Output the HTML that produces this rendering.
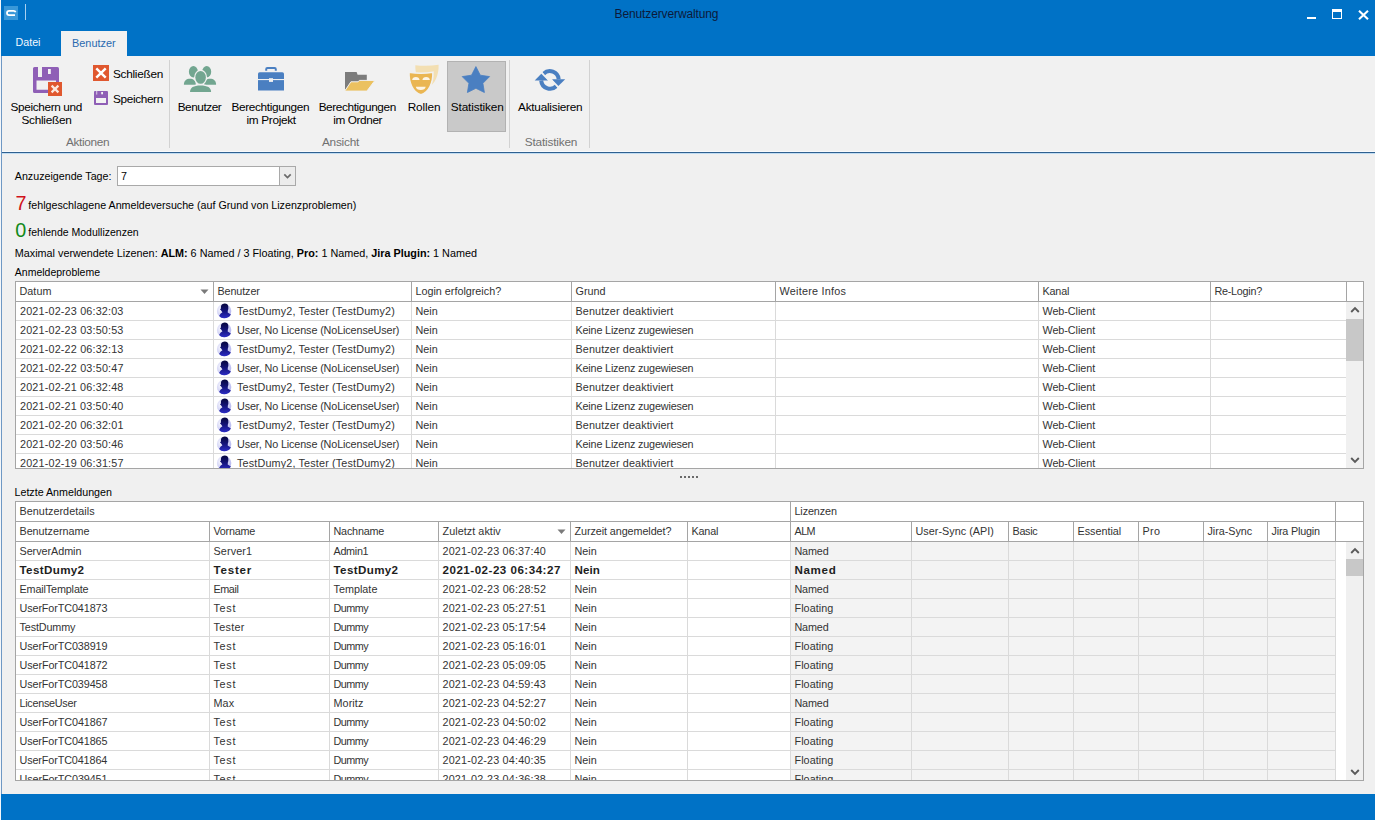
<!DOCTYPE html>
<html><head><meta charset="utf-8"><style>
html,body{margin:0;padding:0}
body{width:1375px;height:820px;overflow:hidden;position:relative;background:#f0f0f0;font-family:"Liberation Sans",sans-serif;font-size:11px}
.t{position:absolute;white-space:pre;line-height:1;}
.a{position:absolute;display:block}
</style></head><body>

<div class="a" style="left:0px;top:0px;width:1375px;height:56px;background:#0072c6;"></div>
<div class="a" style="left:4px;top:6px;width:14px;height:14px;background:#3a98d8;"></div>
<svg class="a" style="left:4px;top:6px" width="14" height="14" viewBox="0 0 14 14"><path d="M11.6 6.2 Q11.2 4.9 9.6 4.9 H5.2 Q3 4.9 3 7 Q3 9.1 5.2 9.1 H11" fill="none" stroke="#fff" stroke-width="1.8"/></svg>
<div class="a" style="left:25px;top:4px;width:1px;height:16px;background:#a8d0f0;"></div>
<div class="t" style="left:614.5px;top:8.00px;font-size:12px;color:#0c1a3a;letter-spacing:-0.12px;">Benutzerverwaltung</div>
<div class="a" style="left:1307px;top:17px;width:9px;height:2px;background:#fff;"></div>
<div class="a" style="left:1332px;top:9px;width:8px;height:6px;border:1px solid #fff;border-top-width:3px"></div>
<svg class="a" style="left:1358px;top:10px" width="11" height="10" viewBox="0 0 11 10"><path d="M1 0.8 L10 9.2 M10 0.8 L1 9.2" stroke="#fff" stroke-width="2.1"/></svg>
<div class="t" style="left:15.5px;top:37.00px;font-size:10.7px;color:#f4f8ff;">Datei</div>
<div class="a" style="left:61px;top:31px;width:66px;height:25px;background:#f1f1f1;"></div>
<div class="t" style="left:72px;top:38.00px;font-size:10.9px;color:#2a6ab0;">Benutzer</div>
<div class="a" style="left:0px;top:56px;width:1375px;height:96px;background:#f1f1f1;"></div>
<div class="a" style="left:0px;top:152px;width:1375px;height:1px;background:#2f6090;"></div>
<div class="a" style="left:0px;top:151px;width:1375px;height:1px;background:#f8fafc;"></div>
<div class="a" style="left:0px;top:153px;width:1375px;height:1px;background:#c0dcf2;"></div>
<div class="a" style="left:1px;top:56px;width:1px;height:764px;background:#6f98c4;"></div>
<svg class="a" style="left:33px;top:67px" width="30" height="30" viewBox="0 0 30 30">
<path fill="#8f5fb6" d="M1.5 0 H5 V10 H26 V15 H23 V13.5 H3.5 V22.8 H15 V26 H1.5 Q0 26 0 24.5 V1.5 Q0 0 1.5 0 Z"/>
<path fill="#8f5fb6" d="M9 0 H24.5 Q26 0 26 1.5 V10 H9 Z"/>
<rect x="15" y="2" width="2.8" height="5" fill="#f4f4f4"/>
<rect x="15" y="15" width="14" height="14" fill="#e0582f"/>
<path d="M18.6 18.6 L25.4 25.4 M25.4 18.6 L18.6 25.4" stroke="#fbe9e0" stroke-width="2.2"/>
</svg>
<div class="t" style="left:10.469px;top:102.00px;font-size:11.8px;color:#000;letter-spacing:-0.351px;">Speichern und</div>
<div class="t" style="left:21.469px;top:115.00px;font-size:11.8px;color:#000;letter-spacing:-0.272px;">Schließen</div>
<svg class="a" style="left:93px;top:65px" width="16" height="16" viewBox="0 0 16 16"><rect width="16" height="16" fill="#e0582f"/><path d="M3.3 3.3 L12.7 12.7 M12.7 3.3 L3.3 12.7" stroke="#fff" stroke-width="2.4"/></svg>
<div class="t" style="left:112.969px;top:69.00px;font-size:11.8px;color:#000;letter-spacing:-0.272px;">Schließen</div>
<svg class="a" style="left:94px;top:91px" width="14" height="14" viewBox="0 0 14 14">
<path fill="#8f5fb6" d="M0 1 Q0 0 1 0 H13 Q14 0 14 1 V13 Q14 14 13 14 H1 Q0 14 0 13 Z"/>
<rect x="2" y="7" width="10" height="5" fill="#f3f3f3"/>
<rect x="2" y="0" width="1.3" height="3.6" fill="#f1f1f1" opacity="0.6"/>
<rect x="7.2" y="1" width="1.8" height="2.3" fill="#f3f3f3"/>
</svg>
<div class="t" style="left:112.969px;top:94.00px;font-size:11.8px;color:#000;letter-spacing:-0.355px;">Speichern</div>
<div class="t" style="left:65.9764px;top:137.00px;font-size:11.8px;color:#707070;letter-spacing:-0.332px;">Aktionen</div>
<div class="a" style="left:169px;top:60px;width:1px;height:88px;background:#d2d2d2;"></div>
<svg class="a" style="left:180px;top:62px" width="40" height="34" viewBox="0 0 40 34">
<ellipse cx="13.4" cy="9.7" rx="4.5" ry="5.7" fill="#72a690"/>
<ellipse cx="26.7" cy="9.7" rx="4.5" ry="5.7" fill="#72a690"/>
<path fill="#72a690" d="M3.9 22.8 C3.9 18.5 6.5 16.8 9.9 16.8 C13.3 16.8 15.8 18.5 15.8 22.8 Z"/>
<path fill="#72a690" d="M24.2 22.8 C24.2 18.5 26.7 16.8 30.1 16.8 C33.5 16.8 36.1 18.5 36.1 22.8 Z"/>
<ellipse cx="20.6" cy="15.4" rx="6.5" ry="7.6" fill="#f1f1f1"/>
<path fill="#f1f1f1" d="M8.8 31 C8.8 25 12.5 22.2 20.5 22.2 C28.5 22.2 32.3 25 32.3 31 Z"/>
<ellipse cx="20.6" cy="15.4" rx="5.25" ry="6.4" fill="#72a690"/>
<path fill="#72a690" d="M10 29.9 C10 25.5 13.5 23.4 20.5 23.4 C27.5 23.4 31.1 25.5 31.1 29.9 Z"/>
</svg>
<div class="t" style="left:177.6324px;top:102.00px;font-size:11.8px;color:#000;letter-spacing:-0.438px;">Benutzer</div>
<svg class="a" style="left:257px;top:66px" width="28" height="26" viewBox="0 0 28 26">
<path fill="none" stroke="#4a7fc1" stroke-width="2" d="M9.2 4.8 V3.2 Q9.2 2 10.4 2 H17.6 Q18.8 2 18.8 3.2 V4.8"/>
<path fill="#4a7fc1" d="M1 7.8 Q1 6.2 2.6 6.2 H25.4 Q27 6.2 27 7.8 V24.6 H1 Z"/>
<rect x="1" y="13" width="26" height="1.1" fill="#f1f1f1"/>
<rect x="12" y="12.2" width="4" height="3.7" fill="#f1f1f1"/>
</svg>
<div class="t" style="left:231.4324px;top:102.00px;font-size:11.8px;color:#000;letter-spacing:-0.348px;">Berechtigungen</div>
<div class="t" style="left:246.40939999999998px;top:115.00px;font-size:11.8px;color:#000;letter-spacing:-0.310px;">im Projekt</div>
<svg class="a" style="left:340px;top:62px" width="40" height="34" viewBox="0 0 40 34">
<path fill="#7c7c7c" d="M5 10 H16.6 L17.6 12.8 H26.8 V20 H12 L5 28 Z"/>
<path fill="#ebc160" stroke="#f1f1f1" stroke-width="1" d="M4.7 29.1 L10.9 19.8 H18.1 L19.3 18.4 H34.9 L26.9 29.1 Z"/>
</svg>
<div class="t" style="left:318.6324px;top:102.00px;font-size:11.8px;color:#000;letter-spacing:-0.386px;">Berechtigungen</div>
<div class="t" style="left:333.2094px;top:115.00px;font-size:11.8px;color:#000;letter-spacing:-0.396px;">im Ordner</div>
<svg class="a" style="left:404px;top:62px" width="40" height="36" viewBox="0 0 40 36">
<path fill="#f3dfb2" d="M11.3 3.2 Q22.8 4.6 34.6 2.8 C35 12.5 31 23.5 23 25.4 C15 23.5 11 12.5 11.3 3.2 Z"/>
<path fill="#eab653" stroke="#f1f1f1" stroke-width="1.6" d="M5 10.3 Q17 12.2 28.9 10.3 C29.3 20.5 25 31 16.9 32.7 C8.8 31 4.6 20.5 5 10.3 Z"/>
<path fill="#fdf5e6" d="M8.1 18 Q8.5 15 11.85 15 Q15.2 15 15.6 18 Z M18.4 18 Q18.8 15 22.15 15 Q25.5 15 25.9 18 Z"/>
<path fill="#fdf5e6" d="M11.8 24.8 H21.7 Q21 28.1 16.75 28.1 Q12.5 28.1 11.8 24.8 Z"/>
</svg>
<div class="t" style="left:407.6324px;top:102.00px;font-size:11.8px;color:#000;letter-spacing:-0.104px;">Rollen</div>
<div class="a" style="left:447px;top:61px;width:57px;height:69px;background:#c9c9c9;border:1px solid #b2b2b2"></div>
<svg class="a" style="left:461px;top:66px" width="30" height="28" viewBox="0 0 30 28"><path fill="#4a7fc1" stroke="#4a7fc1" stroke-width="0.8" stroke-linejoin="round" d="M14.9 0.6 L19.3 9.2 L28.6 10.6 L21.9 17.3 L23.4 26.5 L14.9 22.3 L6.4 26.5 L7.9 17.3 L1.2 10.6 L10.5 9.2 Z"/></svg>
<div class="t" style="left:450.86899999999997px;top:102.00px;font-size:11.8px;color:#000;letter-spacing:-0.154px;">Statistiken</div>
<div class="a" style="left:509px;top:60px;width:1px;height:88px;background:#d2d2d2;"></div>
<div class="t" style="left:321.9764px;top:137.00px;font-size:11.8px;color:#707070;letter-spacing:-0.231px;">Ansicht</div>
<svg class="a" style="left:530px;top:64px" width="40" height="32" viewBox="0 0 40 32">
<path fill="none" stroke="#4a7fc1" stroke-width="4" d="M13.6 9.7 A8.9 8.9 0 0 1 28.7 15.3"/>
<path fill="#4a7fc1" d="M21.9 15.2 H35.2 L28.4 21.9 Z"/>
<path fill="none" stroke="#4a7fc1" stroke-width="4" d="M11.2 16.5 A8.9 8.9 0 0 0 26.2 22.3"/>
<path fill="#4a7fc1" d="M4.7 16.6 H18 L11.3 9.8 Z"/>
<path stroke="#f1f1f1" stroke-width="1" d="M11.5 7.5 L18.6 16.6 M21.5 15.2 L28.2 24"/>
</svg>
<div class="t" style="left:518.0764px;top:102.00px;font-size:11.8px;color:#000;letter-spacing:-0.247px;">Aktualisieren</div>
<div class="t" style="left:524.769px;top:137.00px;font-size:11.8px;color:#707070;letter-spacing:-0.184px;">Statistiken</div>
<div class="a" style="left:589px;top:60px;width:1px;height:88px;background:#d2d2d2;"></div>
<div class="t" style="left:14.8px;top:171.00px;font-size:10.7px;color:#000;">Anzuzeigende Tage:</div>
<div class="a" style="left:117px;top:166px;width:177px;height:18px;background:#fff;border:1px solid #a9a9a9"></div>
<div class="a" style="left:279px;top:167px;width:15px;height:18px;background:#ececec;border-left:1px solid #a9a9a9"></div>
<svg class="a" style="left:283px;top:173px" width="9" height="7" viewBox="0 0 9 7"><path d="M1.3 1.3 L4.5 4.5 L7.7 1.3" fill="none" stroke="#6a6a6a" stroke-width="1.7"/></svg>
<div class="t" style="left:121px;top:171.00px;font-size:10.7px;color:#000;">7</div>
<div class="t" style="left:15.4px;top:194.00px;font-size:19.8px;color:#d0121b;">7</div>
<div class="t" style="left:28.3px;top:200.00px;font-size:10.7px;color:#000;">fehlgeschlagene Anmeldeversuche (auf Grund von Lizenzproblemen)</div>
<div class="t" style="left:15.2px;top:221.00px;font-size:19.8px;color:#128a1a;">0</div>
<div class="t" style="left:28.3px;top:227.00px;font-size:10.5px;color:#000;">fehlende Modullizenzen</div>
<div class="t" style="left:14.8px;top:248.00px;font-size:10.8px;color:#000">Maximal verwendete Lizenen: <b>ALM:</b> 6 Named / 3 Floating, <b>Pro:</b> 1 Named, <b>Jira Plugin:</b> 1 Named</div>
<div class="t" style="left:14.8px;top:267.00px;font-size:10.5px;color:#000;">Anmeldeprobleme</div>
<svg width="0" height="0" style="position:absolute;left:0;top:0"><defs><radialGradient id="ug" cx="0.35" cy="0.4" r="0.75"><stop offset="0" stop-color="#ffffff"/><stop offset="1" stop-color="#aeb0ee"/></radialGradient><linearGradient id="ub" x1="0" y1="0" x2="0" y2="1"><stop offset="0" stop-color="#06063c"/><stop offset="0.5" stop-color="#14147a"/><stop offset="1" stop-color="#2c2cc4"/></linearGradient></defs></svg>
<div class="a" style="left:16px;top:282px;width:1347px;height:186px;background:#ffffff;"></div>
<div class="a" style="left:1346px;top:302px;width:17px;height:166px;background:#f0f0f0;"></div>
<div class="a" style="left:1346px;top:319px;width:17px;height:42px;background:#c8c8c8;"></div>
<svg class="a" style="left:1350px;top:306px" width="10" height="8" viewBox="0 0 10 8"><path d="M1.2 6 L5 2.2 L8.8 6" fill="none" stroke="#5a5a5a" stroke-width="1.9"/></svg>
<svg class="a" style="left:1350px;top:456px" width="10" height="8" viewBox="0 0 10 8"><path d="M1.2 2 L5 5.8 L8.8 2" fill="none" stroke="#5a5a5a" stroke-width="1.9"/></svg>
<div class="a" style="left:15px;top:281px;width:1349px;height:1px;background:#a5a5a5;"></div>
<div class="a" style="left:15px;top:301px;width:1349px;height:1px;background:#a5a5a5;"></div>
<div class="a" style="left:15px;top:468px;width:1349px;height:1px;background:#a5a5a5;"></div>
<div class="a" style="left:15px;top:281px;width:1px;height:188px;background:#a5a5a5;"></div>
<div class="a" style="left:1363px;top:281px;width:1px;height:188px;background:#a5a5a5;"></div>
<div class="a" style="left:213px;top:282px;width:1px;height:19px;background:#a5a5a5;"></div>
<div class="a" style="left:411px;top:282px;width:1px;height:19px;background:#a5a5a5;"></div>
<div class="a" style="left:571px;top:282px;width:1px;height:19px;background:#a5a5a5;"></div>
<div class="a" style="left:775px;top:282px;width:1px;height:19px;background:#a5a5a5;"></div>
<div class="a" style="left:1038px;top:282px;width:1px;height:19px;background:#a5a5a5;"></div>
<div class="a" style="left:1210px;top:282px;width:1px;height:19px;background:#a5a5a5;"></div>
<div class="a" style="left:1346px;top:282px;width:1px;height:19px;background:#a5a5a5;"></div>
<div class="a" style="left:213px;top:302px;width:1px;height:166px;background:#dadada;"></div>
<div class="a" style="left:411px;top:302px;width:1px;height:166px;background:#dadada;"></div>
<div class="a" style="left:571px;top:302px;width:1px;height:166px;background:#dadada;"></div>
<div class="a" style="left:775px;top:302px;width:1px;height:166px;background:#dadada;"></div>
<div class="a" style="left:1038px;top:302px;width:1px;height:166px;background:#dadada;"></div>
<div class="a" style="left:1210px;top:302px;width:1px;height:166px;background:#dadada;"></div>
<div class="t" style="left:19.4836px;top:286.00px;font-size:10.8px;color:#333;letter-spacing:0.048px;">Datum</div>
<div class="t" style="left:217.4836px;top:286.00px;font-size:10.8px;color:#333;letter-spacing:-0.112px;">Benutzer</div>
<div class="t" style="left:415.48359999999997px;top:286.00px;font-size:10.8px;color:#333;letter-spacing:-0.010px;">Login erfolgreich?</div>
<div class="t" style="left:575.49px;top:286.00px;font-size:10.8px;color:#333;">Grund</div>
<div class="t" style="left:779.4992000000001px;top:286.00px;font-size:10.8px;color:#333;letter-spacing:0.259px;">Weitere Infos</div>
<div class="t" style="left:1042.4836px;top:286.00px;font-size:10.8px;color:#333;letter-spacing:-0.152px;">Kanal</div>
<div class="t" style="left:1214.4836px;top:286.00px;font-size:10.8px;color:#333;letter-spacing:-0.268px;">Re-Login?</div>
<svg class="a" style="left:200px;top:289px" width="9" height="6" viewBox="0 0 9 6"><path d="M0.5 0.5 H8.5 L4.5 5 Z" fill="#7a7a7a"/></svg>
<div class="a" style="left:16px;top:302px;width:1330px;height:166px;overflow:hidden">
<div class="a" style="left:0px;top:18px;width:1330px;height:1px;background:#dadada;"></div>
<div class="t" style="left:3.99px;top:4.00px;font-size:10.8px;color:#333;letter-spacing:0.174px;">2021-02-23 06:32:03</div>
<svg class="a" style="left:200px;top:-1px" width="17" height="18" viewBox="0 0 17 18"><circle cx="8.1" cy="10" r="7.2" fill="url(#ug)"/>
<path fill="url(#ub)" d="M5.3 4.2 Q6.2 2.4 8.8 2.4 Q11.9 2.5 12.3 5.4 Q12.6 7.6 11.9 9.3 L11.7 11.6 L14.9 13.4 Q13 17.2 8.1 17.2 Q4.8 17.2 3.1 15 Q4.2 12.4 6.4 11.3 L5.6 10.3 Q5.2 9.4 4.7 9.1 L4.0 8.5 L4.9 7.6 Q4.8 5.6 5.3 4.2 Z"/></svg>
<div class="t" style="left:220.99560000000002px;top:4.00px;font-size:10.8px;color:#333;letter-spacing:0.159px;">TestDumy2, Tester (TestDumy2)</div>
<div class="t" style="left:399.48359999999997px;top:4.00px;font-size:10.8px;color:#333;">Nein</div>
<div class="t" style="left:559.4836px;top:4.00px;font-size:10.8px;color:#333;letter-spacing:0.127px;">Benutzer deaktiviert</div>
<div class="t" style="left:1026.4992px;top:4.00px;font-size:10.8px;color:#333;letter-spacing:-0.056px;">Web-Client</div>
<div class="a" style="left:0px;top:37px;width:1330px;height:1px;background:#dadada;"></div>
<div class="t" style="left:3.99px;top:23.00px;font-size:10.8px;color:#333;letter-spacing:0.174px;">2021-02-23 03:50:53</div>
<svg class="a" style="left:200px;top:18px" width="17" height="18" viewBox="0 0 17 18"><circle cx="8.1" cy="10" r="7.2" fill="url(#ug)"/>
<path fill="url(#ub)" d="M5.3 4.2 Q6.2 2.4 8.8 2.4 Q11.9 2.5 12.3 5.4 Q12.6 7.6 11.9 9.3 L11.7 11.6 L14.9 13.4 Q13 17.2 8.1 17.2 Q4.8 17.2 3.1 15 Q4.2 12.4 6.4 11.3 L5.6 10.3 Q5.2 9.4 4.7 9.1 L4.0 8.5 L4.9 7.6 Q4.8 5.6 5.3 4.2 Z"/></svg>
<div class="t" style="left:220.9846px;top:23.00px;font-size:10.8px;color:#333;letter-spacing:-0.121px;">User, No License (NoLicenseUser)</div>
<div class="t" style="left:399.48359999999997px;top:23.00px;font-size:10.8px;color:#333;">Nein</div>
<div class="t" style="left:559.4836px;top:23.00px;font-size:10.8px;color:#333;letter-spacing:-0.172px;">Keine Lizenz zugewiesen</div>
<div class="t" style="left:1026.4992px;top:23.00px;font-size:10.8px;color:#333;letter-spacing:-0.056px;">Web-Client</div>
<div class="a" style="left:0px;top:56px;width:1330px;height:1px;background:#dadada;"></div>
<div class="t" style="left:3.99px;top:42.00px;font-size:10.8px;color:#333;letter-spacing:0.174px;">2021-02-22 06:32:13</div>
<svg class="a" style="left:200px;top:37px" width="17" height="18" viewBox="0 0 17 18"><circle cx="8.1" cy="10" r="7.2" fill="url(#ug)"/>
<path fill="url(#ub)" d="M5.3 4.2 Q6.2 2.4 8.8 2.4 Q11.9 2.5 12.3 5.4 Q12.6 7.6 11.9 9.3 L11.7 11.6 L14.9 13.4 Q13 17.2 8.1 17.2 Q4.8 17.2 3.1 15 Q4.2 12.4 6.4 11.3 L5.6 10.3 Q5.2 9.4 4.7 9.1 L4.0 8.5 L4.9 7.6 Q4.8 5.6 5.3 4.2 Z"/></svg>
<div class="t" style="left:220.99560000000002px;top:42.00px;font-size:10.8px;color:#333;letter-spacing:0.159px;">TestDumy2, Tester (TestDumy2)</div>
<div class="t" style="left:399.48359999999997px;top:42.00px;font-size:10.8px;color:#333;">Nein</div>
<div class="t" style="left:559.4836px;top:42.00px;font-size:10.8px;color:#333;letter-spacing:0.127px;">Benutzer deaktiviert</div>
<div class="t" style="left:1026.4992px;top:42.00px;font-size:10.8px;color:#333;letter-spacing:-0.056px;">Web-Client</div>
<div class="a" style="left:0px;top:75px;width:1330px;height:1px;background:#dadada;"></div>
<div class="t" style="left:3.99px;top:61.00px;font-size:10.8px;color:#333;letter-spacing:0.177px;">2021-02-22 03:50:47</div>
<svg class="a" style="left:200px;top:56px" width="17" height="18" viewBox="0 0 17 18"><circle cx="8.1" cy="10" r="7.2" fill="url(#ug)"/>
<path fill="url(#ub)" d="M5.3 4.2 Q6.2 2.4 8.8 2.4 Q11.9 2.5 12.3 5.4 Q12.6 7.6 11.9 9.3 L11.7 11.6 L14.9 13.4 Q13 17.2 8.1 17.2 Q4.8 17.2 3.1 15 Q4.2 12.4 6.4 11.3 L5.6 10.3 Q5.2 9.4 4.7 9.1 L4.0 8.5 L4.9 7.6 Q4.8 5.6 5.3 4.2 Z"/></svg>
<div class="t" style="left:220.9846px;top:61.00px;font-size:10.8px;color:#333;letter-spacing:-0.121px;">User, No License (NoLicenseUser)</div>
<div class="t" style="left:399.48359999999997px;top:61.00px;font-size:10.8px;color:#333;">Nein</div>
<div class="t" style="left:559.4836px;top:61.00px;font-size:10.8px;color:#333;letter-spacing:-0.172px;">Keine Lizenz zugewiesen</div>
<div class="t" style="left:1026.4992px;top:61.00px;font-size:10.8px;color:#333;letter-spacing:-0.056px;">Web-Client</div>
<div class="a" style="left:0px;top:94px;width:1330px;height:1px;background:#dadada;"></div>
<div class="t" style="left:3.99px;top:80.00px;font-size:10.8px;color:#333;letter-spacing:0.173px;">2021-02-21 06:32:48</div>
<svg class="a" style="left:200px;top:75px" width="17" height="18" viewBox="0 0 17 18"><circle cx="8.1" cy="10" r="7.2" fill="url(#ug)"/>
<path fill="url(#ub)" d="M5.3 4.2 Q6.2 2.4 8.8 2.4 Q11.9 2.5 12.3 5.4 Q12.6 7.6 11.9 9.3 L11.7 11.6 L14.9 13.4 Q13 17.2 8.1 17.2 Q4.8 17.2 3.1 15 Q4.2 12.4 6.4 11.3 L5.6 10.3 Q5.2 9.4 4.7 9.1 L4.0 8.5 L4.9 7.6 Q4.8 5.6 5.3 4.2 Z"/></svg>
<div class="t" style="left:220.99560000000002px;top:80.00px;font-size:10.8px;color:#333;letter-spacing:0.159px;">TestDumy2, Tester (TestDumy2)</div>
<div class="t" style="left:399.48359999999997px;top:80.00px;font-size:10.8px;color:#333;">Nein</div>
<div class="t" style="left:559.4836px;top:80.00px;font-size:10.8px;color:#333;letter-spacing:0.127px;">Benutzer deaktiviert</div>
<div class="t" style="left:1026.4992px;top:80.00px;font-size:10.8px;color:#333;letter-spacing:-0.056px;">Web-Client</div>
<div class="a" style="left:0px;top:113px;width:1330px;height:1px;background:#dadada;"></div>
<div class="t" style="left:3.99px;top:99.00px;font-size:10.8px;color:#333;letter-spacing:0.171px;">2021-02-21 03:50:40</div>
<svg class="a" style="left:200px;top:94px" width="17" height="18" viewBox="0 0 17 18"><circle cx="8.1" cy="10" r="7.2" fill="url(#ug)"/>
<path fill="url(#ub)" d="M5.3 4.2 Q6.2 2.4 8.8 2.4 Q11.9 2.5 12.3 5.4 Q12.6 7.6 11.9 9.3 L11.7 11.6 L14.9 13.4 Q13 17.2 8.1 17.2 Q4.8 17.2 3.1 15 Q4.2 12.4 6.4 11.3 L5.6 10.3 Q5.2 9.4 4.7 9.1 L4.0 8.5 L4.9 7.6 Q4.8 5.6 5.3 4.2 Z"/></svg>
<div class="t" style="left:220.9846px;top:99.00px;font-size:10.8px;color:#333;letter-spacing:-0.121px;">User, No License (NoLicenseUser)</div>
<div class="t" style="left:399.48359999999997px;top:99.00px;font-size:10.8px;color:#333;">Nein</div>
<div class="t" style="left:559.4836px;top:99.00px;font-size:10.8px;color:#333;letter-spacing:-0.172px;">Keine Lizenz zugewiesen</div>
<div class="t" style="left:1026.4992px;top:99.00px;font-size:10.8px;color:#333;letter-spacing:-0.056px;">Web-Client</div>
<div class="a" style="left:0px;top:132px;width:1330px;height:1px;background:#dadada;"></div>
<div class="t" style="left:3.99px;top:118.00px;font-size:10.8px;color:#333;letter-spacing:0.177px;">2021-02-20 06:32:01</div>
<svg class="a" style="left:200px;top:113px" width="17" height="18" viewBox="0 0 17 18"><circle cx="8.1" cy="10" r="7.2" fill="url(#ug)"/>
<path fill="url(#ub)" d="M5.3 4.2 Q6.2 2.4 8.8 2.4 Q11.9 2.5 12.3 5.4 Q12.6 7.6 11.9 9.3 L11.7 11.6 L14.9 13.4 Q13 17.2 8.1 17.2 Q4.8 17.2 3.1 15 Q4.2 12.4 6.4 11.3 L5.6 10.3 Q5.2 9.4 4.7 9.1 L4.0 8.5 L4.9 7.6 Q4.8 5.6 5.3 4.2 Z"/></svg>
<div class="t" style="left:220.99560000000002px;top:118.00px;font-size:10.8px;color:#333;letter-spacing:0.159px;">TestDumy2, Tester (TestDumy2)</div>
<div class="t" style="left:399.48359999999997px;top:118.00px;font-size:10.8px;color:#333;">Nein</div>
<div class="t" style="left:559.4836px;top:118.00px;font-size:10.8px;color:#333;letter-spacing:0.127px;">Benutzer deaktiviert</div>
<div class="t" style="left:1026.4992px;top:118.00px;font-size:10.8px;color:#333;letter-spacing:-0.056px;">Web-Client</div>
<div class="a" style="left:0px;top:151px;width:1330px;height:1px;background:#dadada;"></div>
<div class="t" style="left:3.99px;top:137.00px;font-size:10.8px;color:#333;letter-spacing:0.174px;">2021-02-20 03:50:46</div>
<svg class="a" style="left:200px;top:132px" width="17" height="18" viewBox="0 0 17 18"><circle cx="8.1" cy="10" r="7.2" fill="url(#ug)"/>
<path fill="url(#ub)" d="M5.3 4.2 Q6.2 2.4 8.8 2.4 Q11.9 2.5 12.3 5.4 Q12.6 7.6 11.9 9.3 L11.7 11.6 L14.9 13.4 Q13 17.2 8.1 17.2 Q4.8 17.2 3.1 15 Q4.2 12.4 6.4 11.3 L5.6 10.3 Q5.2 9.4 4.7 9.1 L4.0 8.5 L4.9 7.6 Q4.8 5.6 5.3 4.2 Z"/></svg>
<div class="t" style="left:220.9846px;top:137.00px;font-size:10.8px;color:#333;letter-spacing:-0.121px;">User, No License (NoLicenseUser)</div>
<div class="t" style="left:399.48359999999997px;top:137.00px;font-size:10.8px;color:#333;">Nein</div>
<div class="t" style="left:559.4836px;top:137.00px;font-size:10.8px;color:#333;letter-spacing:-0.172px;">Keine Lizenz zugewiesen</div>
<div class="t" style="left:1026.4992px;top:137.00px;font-size:10.8px;color:#333;letter-spacing:-0.056px;">Web-Client</div>
<div class="t" style="left:3.99px;top:156.00px;font-size:10.8px;color:#333;letter-spacing:0.177px;">2021-02-19 06:31:57</div>
<svg class="a" style="left:200px;top:151px" width="17" height="18" viewBox="0 0 17 18"><circle cx="8.1" cy="10" r="7.2" fill="url(#ug)"/>
<path fill="url(#ub)" d="M5.3 4.2 Q6.2 2.4 8.8 2.4 Q11.9 2.5 12.3 5.4 Q12.6 7.6 11.9 9.3 L11.7 11.6 L14.9 13.4 Q13 17.2 8.1 17.2 Q4.8 17.2 3.1 15 Q4.2 12.4 6.4 11.3 L5.6 10.3 Q5.2 9.4 4.7 9.1 L4.0 8.5 L4.9 7.6 Q4.8 5.6 5.3 4.2 Z"/></svg>
<div class="t" style="left:220.99560000000002px;top:156.00px;font-size:10.8px;color:#333;letter-spacing:0.159px;">TestDumy2, Tester (TestDumy2)</div>
<div class="t" style="left:399.48359999999997px;top:156.00px;font-size:10.8px;color:#333;">Nein</div>
<div class="t" style="left:559.4836px;top:156.00px;font-size:10.8px;color:#333;letter-spacing:0.127px;">Benutzer deaktiviert</div>
<div class="t" style="left:1026.4992px;top:156.00px;font-size:10.8px;color:#333;letter-spacing:-0.056px;">Web-Client</div>
</div>
<div class="a" style="left:680px;top:476px;width:2px;height:2px;background:#6a6a6a;"></div>
<div class="a" style="left:684px;top:476px;width:2px;height:2px;background:#6a6a6a;"></div>
<div class="a" style="left:688px;top:476px;width:2px;height:2px;background:#6a6a6a;"></div>
<div class="a" style="left:692px;top:476px;width:2px;height:2px;background:#6a6a6a;"></div>
<div class="a" style="left:696px;top:476px;width:2px;height:2px;background:#6a6a6a;"></div>
<div class="t" style="left:14.5px;top:487.00px;font-size:10.7px;color:#000;">Letzte Anmeldungen</div>
<div class="a" style="left:16px;top:502px;width:1347px;height:278px;background:#ffffff;"></div>
<div class="a" style="left:790px;top:542px;width:545px;height:238px;background:#f3f3f3;"></div>
<div class="a" style="left:1346px;top:542px;width:17px;height:238px;background:#f0f0f0;"></div>
<div class="a" style="left:1346px;top:559px;width:17px;height:17px;background:#c8c8c8;"></div>
<svg class="a" style="left:1350px;top:547px" width="10" height="8" viewBox="0 0 10 8"><path d="M1.2 6 L5 2.2 L8.8 6" fill="none" stroke="#5a5a5a" stroke-width="1.9"/></svg>
<svg class="a" style="left:1350px;top:768px" width="10" height="8" viewBox="0 0 10 8"><path d="M1.2 2 L5 5.8 L8.8 2" fill="none" stroke="#5a5a5a" stroke-width="1.9"/></svg>
<div class="a" style="left:15px;top:501px;width:1349px;height:1px;background:#a5a5a5;"></div>
<div class="a" style="left:15px;top:521px;width:1349px;height:1px;background:#a5a5a5;"></div>
<div class="a" style="left:15px;top:541px;width:1349px;height:1px;background:#a5a5a5;"></div>
<div class="a" style="left:15px;top:780px;width:1349px;height:1px;background:#a5a5a5;"></div>
<div class="a" style="left:15px;top:501px;width:1px;height:280px;background:#a5a5a5;"></div>
<div class="a" style="left:1363px;top:501px;width:1px;height:280px;background:#a5a5a5;"></div>
<div class="a" style="left:790px;top:502px;width:1px;height:19px;background:#a5a5a5;"></div>
<div class="a" style="left:1335px;top:502px;width:1px;height:19px;background:#a5a5a5;"></div>
<div class="a" style="left:209px;top:522px;width:1px;height:19px;background:#a5a5a5;"></div>
<div class="a" style="left:329px;top:522px;width:1px;height:19px;background:#a5a5a5;"></div>
<div class="a" style="left:438px;top:522px;width:1px;height:19px;background:#a5a5a5;"></div>
<div class="a" style="left:570px;top:522px;width:1px;height:19px;background:#a5a5a5;"></div>
<div class="a" style="left:687px;top:522px;width:1px;height:19px;background:#a5a5a5;"></div>
<div class="a" style="left:790px;top:522px;width:1px;height:19px;background:#a5a5a5;"></div>
<div class="a" style="left:911px;top:522px;width:1px;height:19px;background:#a5a5a5;"></div>
<div class="a" style="left:1008px;top:522px;width:1px;height:19px;background:#a5a5a5;"></div>
<div class="a" style="left:1073px;top:522px;width:1px;height:19px;background:#a5a5a5;"></div>
<div class="a" style="left:1138px;top:522px;width:1px;height:19px;background:#a5a5a5;"></div>
<div class="a" style="left:1203px;top:522px;width:1px;height:19px;background:#a5a5a5;"></div>
<div class="a" style="left:1267px;top:522px;width:1px;height:19px;background:#a5a5a5;"></div>
<div class="a" style="left:1335px;top:522px;width:1px;height:19px;background:#a5a5a5;"></div>
<div class="a" style="left:209px;top:542px;width:1px;height:238px;background:#dadada;"></div>
<div class="a" style="left:329px;top:542px;width:1px;height:238px;background:#dadada;"></div>
<div class="a" style="left:438px;top:542px;width:1px;height:238px;background:#dadada;"></div>
<div class="a" style="left:570px;top:542px;width:1px;height:238px;background:#dadada;"></div>
<div class="a" style="left:687px;top:542px;width:1px;height:238px;background:#dadada;"></div>
<div class="a" style="left:790px;top:542px;width:1px;height:238px;background:#dadada;"></div>
<div class="a" style="left:911px;top:542px;width:1px;height:238px;background:#dadada;"></div>
<div class="a" style="left:1008px;top:542px;width:1px;height:238px;background:#dadada;"></div>
<div class="a" style="left:1073px;top:542px;width:1px;height:238px;background:#dadada;"></div>
<div class="a" style="left:1138px;top:542px;width:1px;height:238px;background:#dadada;"></div>
<div class="a" style="left:1203px;top:542px;width:1px;height:238px;background:#dadada;"></div>
<div class="a" style="left:1267px;top:542px;width:1px;height:238px;background:#dadada;"></div>
<div class="a" style="left:1335px;top:542px;width:1px;height:238px;background:#dadada;"></div>
<div class="t" style="left:19.4836px;top:506.00px;font-size:10.8px;color:#333;letter-spacing:0.052px;">Benutzerdetails</div>
<div class="t" style="left:794.4836px;top:506.00px;font-size:10.8px;color:#333;letter-spacing:-0.106px;">Lizenzen</div>
<div class="t" style="left:19.4836px;top:526.00px;font-size:10.8px;color:#333;letter-spacing:-0.026px;">Benutzername</div>
<div class="t" style="left:213.49919999999997px;top:526.00px;font-size:10.8px;color:#333;letter-spacing:-0.251px;">Vorname</div>
<div class="t" style="left:333.48359999999997px;top:526.00px;font-size:10.8px;color:#333;letter-spacing:-0.195px;">Nachname</div>
<div class="t" style="left:442.4936px;top:526.00px;font-size:10.8px;color:#333;letter-spacing:0.056px;">Zuletzt aktiv</div>
<div class="t" style="left:574.4936px;top:526.00px;font-size:10.8px;color:#333;letter-spacing:-0.084px;">Zurzeit angemeldet?</div>
<div class="t" style="left:691.4836px;top:526.00px;font-size:10.8px;color:#333;letter-spacing:-0.152px;">Kanal</div>
<div class="t" style="left:794.4996px;top:526.00px;font-size:10.8px;color:#333;letter-spacing:-0.549px;">ALM</div>
<div class="t" style="left:915.4846px;top:526.00px;font-size:10.8px;color:#333;letter-spacing:0.035px;">User-Sync (API)</div>
<div class="t" style="left:1012.4836px;top:526.00px;font-size:10.8px;color:#333;letter-spacing:-0.285px;">Basic</div>
<div class="t" style="left:1077.4836px;top:526.00px;font-size:10.8px;color:#333;letter-spacing:-0.013px;">Essential</div>
<div class="t" style="left:1142.4836px;top:526.00px;font-size:10.8px;color:#333;letter-spacing:0.367px;">Pro</div>
<div class="t" style="left:1207.4968px;top:526.00px;font-size:10.8px;color:#333;letter-spacing:-0.045px;">Jira-Sync</div>
<div class="t" style="left:1271.4968px;top:526.00px;font-size:10.8px;color:#333;letter-spacing:-0.185px;">Jira Plugin</div>
<svg class="a" style="left:557px;top:529px" width="9" height="6" viewBox="0 0 9 6"><path d="M0.5 0.5 H8.5 L4.5 5 Z" fill="#7a7a7a"/></svg>
<div class="a" style="left:16px;top:542px;width:1319px;height:238px;overflow:hidden">
<div class="a" style="left:0px;top:18px;width:1319px;height:1px;background:#dadada;"></div>
<div class="t" style="left:3.4909999999999997px;top:4.00px;font-size:10.8px;color:#333;letter-spacing:-0.044px;">ServerAdmin</div>
<div class="t" style="left:197.491px;top:4.00px;font-size:10.8px;color:#333;letter-spacing:0.117px;">Server1</div>
<div class="t" style="left:317.49960000000004px;top:4.00px;font-size:10.8px;color:#333;letter-spacing:-0.294px;">Admin1</div>
<div class="t" style="left:426.48999999999995px;top:4.00px;font-size:10.8px;color:#333;letter-spacing:0.171px;">2021-02-23 06:37:40</div>
<div class="t" style="left:558.4836px;top:4.00px;font-size:10.8px;color:#333;">Nein</div>
<div class="t" style="left:778.4836px;top:4.00px;font-size:10.8px;color:#333;letter-spacing:-0.161px;">Named</div>
<div class="a" style="left:0px;top:37px;width:1319px;height:1px;background:#dadada;"></div>
<div class="t" style="left:3.5px;top:22.00px;font-size:11.6px;color:#1e1e1e;font-weight:bold;letter-spacing:0.366px;">TestDumy2</div>
<div class="t" style="left:197.5px;top:22.00px;font-size:11.6px;color:#1e1e1e;font-weight:bold;letter-spacing:0.770px;">Tester</div>
<div class="t" style="left:317.5px;top:22.00px;font-size:11.6px;color:#1e1e1e;font-weight:bold;letter-spacing:0.366px;">TestDumy2</div>
<div class="t" style="left:426.5px;top:22.00px;font-size:11.6px;color:#1e1e1e;font-weight:bold;letter-spacing:0.496px;">2021-02-23 06:34:27</div>
<div class="t" style="left:558.5px;top:22.00px;font-size:11.6px;color:#1e1e1e;font-weight:bold;letter-spacing:0.086px;">Nein</div>
<div class="t" style="left:778.5px;top:22.00px;font-size:11.6px;color:#1e1e1e;font-weight:bold;letter-spacing:0.639px;">Named</div>
<div class="a" style="left:0px;top:56px;width:1319px;height:1px;background:#dadada;"></div>
<div class="t" style="left:3.4836px;top:42.00px;font-size:10.8px;color:#333;letter-spacing:-0.139px;">EmailTemplate</div>
<div class="t" style="left:197.4836px;top:42.00px;font-size:10.8px;color:#333;letter-spacing:-0.398px;">Email</div>
<div class="t" style="left:317.4956px;top:42.00px;font-size:10.8px;color:#333;letter-spacing:0.014px;">Template</div>
<div class="t" style="left:426.48999999999995px;top:42.00px;font-size:10.8px;color:#333;letter-spacing:0.177px;">2021-02-23 06:28:52</div>
<div class="t" style="left:558.4836px;top:42.00px;font-size:10.8px;color:#333;">Nein</div>
<div class="t" style="left:778.4836px;top:42.00px;font-size:10.8px;color:#333;letter-spacing:-0.161px;">Named</div>
<div class="a" style="left:0px;top:75px;width:1319px;height:1px;background:#dadada;"></div>
<div class="t" style="left:3.4846000000000004px;top:61.00px;font-size:10.8px;color:#333;letter-spacing:-0.102px;">UserForTC041873</div>
<div class="t" style="left:197.49560000000002px;top:61.00px;font-size:10.8px;color:#333;letter-spacing:0.702px;">Test</div>
<div class="t" style="left:317.48359999999997px;top:61.00px;font-size:10.8px;color:#333;letter-spacing:-0.497px;">Dummy</div>
<div class="t" style="left:426.48999999999995px;top:61.00px;font-size:10.8px;color:#333;letter-spacing:0.177px;">2021-02-23 05:27:51</div>
<div class="t" style="left:558.4836px;top:61.00px;font-size:10.8px;color:#333;">Nein</div>
<div class="t" style="left:778.4836px;top:61.00px;font-size:10.8px;color:#333;letter-spacing:0.066px;">Floating</div>
<div class="a" style="left:0px;top:94px;width:1319px;height:1px;background:#dadada;"></div>
<div class="t" style="left:3.4956px;top:80.00px;font-size:10.8px;color:#333;letter-spacing:-0.130px;">TestDummy</div>
<div class="t" style="left:197.49560000000002px;top:80.00px;font-size:10.8px;color:#333;letter-spacing:0.280px;">Tester</div>
<div class="t" style="left:317.48359999999997px;top:80.00px;font-size:10.8px;color:#333;letter-spacing:-0.497px;">Dummy</div>
<div class="t" style="left:426.48999999999995px;top:80.00px;font-size:10.8px;color:#333;letter-spacing:0.165px;">2021-02-23 05:17:54</div>
<div class="t" style="left:558.4836px;top:80.00px;font-size:10.8px;color:#333;">Nein</div>
<div class="t" style="left:778.4836px;top:80.00px;font-size:10.8px;color:#333;letter-spacing:-0.161px;">Named</div>
<div class="a" style="left:0px;top:113px;width:1319px;height:1px;background:#dadada;"></div>
<div class="t" style="left:3.4846000000000004px;top:99.00px;font-size:10.8px;color:#333;letter-spacing:-0.100px;">UserForTC038919</div>
<div class="t" style="left:197.49560000000002px;top:99.00px;font-size:10.8px;color:#333;letter-spacing:0.702px;">Test</div>
<div class="t" style="left:317.48359999999997px;top:99.00px;font-size:10.8px;color:#333;letter-spacing:-0.497px;">Dummy</div>
<div class="t" style="left:426.48999999999995px;top:99.00px;font-size:10.8px;color:#333;letter-spacing:0.177px;">2021-02-23 05:16:01</div>
<div class="t" style="left:558.4836px;top:99.00px;font-size:10.8px;color:#333;">Nein</div>
<div class="t" style="left:778.4836px;top:99.00px;font-size:10.8px;color:#333;letter-spacing:0.066px;">Floating</div>
<div class="a" style="left:0px;top:132px;width:1319px;height:1px;background:#dadada;"></div>
<div class="t" style="left:3.4846000000000004px;top:118.00px;font-size:10.8px;color:#333;letter-spacing:-0.097px;">UserForTC041872</div>
<div class="t" style="left:197.49560000000002px;top:118.00px;font-size:10.8px;color:#333;letter-spacing:0.702px;">Test</div>
<div class="t" style="left:317.48359999999997px;top:118.00px;font-size:10.8px;color:#333;letter-spacing:-0.497px;">Dummy</div>
<div class="t" style="left:426.48999999999995px;top:118.00px;font-size:10.8px;color:#333;letter-spacing:0.172px;">2021-02-23 05:09:05</div>
<div class="t" style="left:558.4836px;top:118.00px;font-size:10.8px;color:#333;">Nein</div>
<div class="t" style="left:778.4836px;top:118.00px;font-size:10.8px;color:#333;letter-spacing:0.066px;">Floating</div>
<div class="a" style="left:0px;top:151px;width:1319px;height:1px;background:#dadada;"></div>
<div class="t" style="left:3.4846000000000004px;top:137.00px;font-size:10.8px;color:#333;letter-spacing:-0.103px;">UserForTC039458</div>
<div class="t" style="left:197.49560000000002px;top:137.00px;font-size:10.8px;color:#333;letter-spacing:0.702px;">Test</div>
<div class="t" style="left:317.48359999999997px;top:137.00px;font-size:10.8px;color:#333;letter-spacing:-0.497px;">Dummy</div>
<div class="t" style="left:426.48999999999995px;top:137.00px;font-size:10.8px;color:#333;letter-spacing:0.174px;">2021-02-23 04:59:43</div>
<div class="t" style="left:558.4836px;top:137.00px;font-size:10.8px;color:#333;">Nein</div>
<div class="t" style="left:778.4836px;top:137.00px;font-size:10.8px;color:#333;letter-spacing:0.066px;">Floating</div>
<div class="a" style="left:0px;top:170px;width:1319px;height:1px;background:#dadada;"></div>
<div class="t" style="left:3.4836px;top:156.00px;font-size:10.8px;color:#333;letter-spacing:-0.267px;">LicenseUser</div>
<div class="t" style="left:197.4836px;top:156.00px;font-size:10.8px;color:#333;letter-spacing:0.102px;">Max</div>
<div class="t" style="left:317.48359999999997px;top:156.00px;font-size:10.8px;color:#333;letter-spacing:0.086px;">Moritz</div>
<div class="t" style="left:426.48999999999995px;top:156.00px;font-size:10.8px;color:#333;letter-spacing:0.177px;">2021-02-23 04:52:27</div>
<div class="t" style="left:558.4836px;top:156.00px;font-size:10.8px;color:#333;">Nein</div>
<div class="t" style="left:778.4836px;top:156.00px;font-size:10.8px;color:#333;letter-spacing:-0.161px;">Named</div>
<div class="a" style="left:0px;top:189px;width:1319px;height:1px;background:#dadada;"></div>
<div class="t" style="left:3.4846000000000004px;top:175.00px;font-size:10.8px;color:#333;letter-spacing:-0.097px;">UserForTC041867</div>
<div class="t" style="left:197.49560000000002px;top:175.00px;font-size:10.8px;color:#333;letter-spacing:0.702px;">Test</div>
<div class="t" style="left:317.48359999999997px;top:175.00px;font-size:10.8px;color:#333;letter-spacing:-0.497px;">Dummy</div>
<div class="t" style="left:426.48999999999995px;top:175.00px;font-size:10.8px;color:#333;letter-spacing:0.177px;">2021-02-23 04:50:02</div>
<div class="t" style="left:558.4836px;top:175.00px;font-size:10.8px;color:#333;">Nein</div>
<div class="t" style="left:778.4836px;top:175.00px;font-size:10.8px;color:#333;letter-spacing:0.066px;">Floating</div>
<div class="a" style="left:0px;top:208px;width:1319px;height:1px;background:#dadada;"></div>
<div class="t" style="left:3.4846000000000004px;top:194.00px;font-size:10.8px;color:#333;letter-spacing:-0.104px;">UserForTC041865</div>
<div class="t" style="left:197.49560000000002px;top:194.00px;font-size:10.8px;color:#333;letter-spacing:0.702px;">Test</div>
<div class="t" style="left:317.48359999999997px;top:194.00px;font-size:10.8px;color:#333;letter-spacing:-0.497px;">Dummy</div>
<div class="t" style="left:426.48999999999995px;top:194.00px;font-size:10.8px;color:#333;letter-spacing:0.175px;">2021-02-23 04:46:29</div>
<div class="t" style="left:558.4836px;top:194.00px;font-size:10.8px;color:#333;">Nein</div>
<div class="t" style="left:778.4836px;top:194.00px;font-size:10.8px;color:#333;letter-spacing:0.066px;">Floating</div>
<div class="a" style="left:0px;top:227px;width:1319px;height:1px;background:#dadada;"></div>
<div class="t" style="left:3.4846000000000004px;top:213.00px;font-size:10.8px;color:#333;letter-spacing:-0.114px;">UserForTC041864</div>
<div class="t" style="left:197.49560000000002px;top:213.00px;font-size:10.8px;color:#333;letter-spacing:0.702px;">Test</div>
<div class="t" style="left:317.48359999999997px;top:213.00px;font-size:10.8px;color:#333;letter-spacing:-0.497px;">Dummy</div>
<div class="t" style="left:426.48999999999995px;top:213.00px;font-size:10.8px;color:#333;letter-spacing:0.172px;">2021-02-23 04:40:35</div>
<div class="t" style="left:558.4836px;top:213.00px;font-size:10.8px;color:#333;">Nein</div>
<div class="t" style="left:778.4836px;top:213.00px;font-size:10.8px;color:#333;letter-spacing:0.066px;">Floating</div>
<div class="t" style="left:3.4846000000000004px;top:232.00px;font-size:10.8px;color:#333;letter-spacing:-0.098px;">UserForTC039451</div>
<div class="t" style="left:197.49560000000002px;top:232.00px;font-size:10.8px;color:#333;letter-spacing:0.702px;">Test</div>
<div class="t" style="left:317.48359999999997px;top:232.00px;font-size:10.8px;color:#333;letter-spacing:-0.497px;">Dummy</div>
<div class="t" style="left:426.48999999999995px;top:232.00px;font-size:10.8px;color:#333;letter-spacing:0.173px;">2021-02-23 04:36:38</div>
<div class="t" style="left:558.4836px;top:232.00px;font-size:10.8px;color:#333;">Nein</div>
<div class="t" style="left:778.4836px;top:232.00px;font-size:10.8px;color:#333;letter-spacing:0.066px;">Floating</div>
</div>
<div class="a" style="left:0px;top:794px;width:1375px;height:26px;background:#0072c6;"></div>
<div class="a" style="left:0px;top:0px;width:1px;height:820px;background:#f4f7fa;"></div>
</body></html>
